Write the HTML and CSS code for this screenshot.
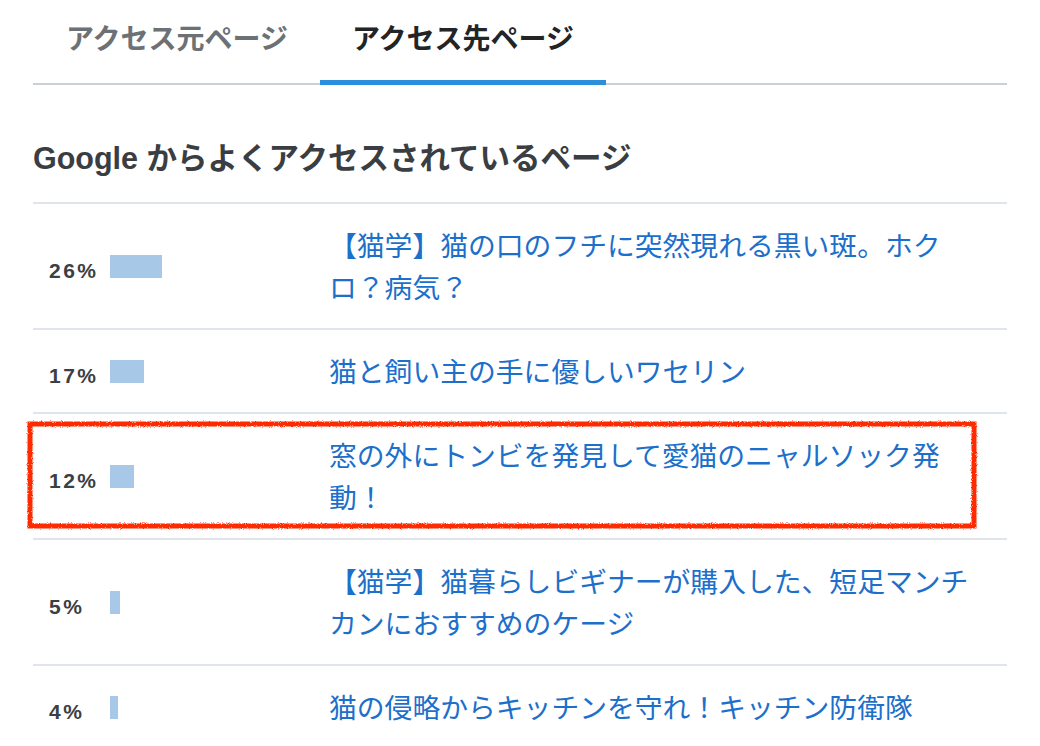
FILE: index.html
```html
<!DOCTYPE html>
<html lang="ja">
<head>
    <meta charset="UTF-8">
    <title>アクセス先ページ</title>
    <link rel="stylesheet" href="styles.css">
</head>
<body>
    <div class="panel">
        <div class="tabs">
            <div class="tab">アクセス元ページ</div>
            <div class="tab active">アクセス先ページ</div>
        </div>

        <h2 class="title">Google からよくアクセスされているページ</h2>

        <div class="rank">
            <div class="row">
                <div class="stat"><span class="pct">26%</span><span class="bar" style="width: 52px;"></span></div>
                <a class="page" href="#">【猫学】猫の口のフチに突然現れる黒い斑。ホクロ？病気？</a>
            </div>
            <div class="row">
                <div class="stat"><span class="pct">17%</span><span class="bar" style="width: 34px;"></span></div>
                <a class="page" href="#">猫と飼い主の手に優しいワセリン</a>
            </div>
            <div class="row marked">
                <div class="stat"><span class="pct">12%</span><span class="bar" style="width: 24px;"></span></div>
                <a class="page" href="#">窓の外にトンビを発見して愛猫のニャルソック発動！</a>
                <!-- hand drawn highlight -->
                <svg class="mark" width="952" height="110" viewBox="0 0 952 110">
                    <defs>
                        <filter id="rough" x="-2%" y="-10%" width="104%" height="120%">
                            <feTurbulence type="fractalNoise" baseFrequency="0.9" numOctaves="2" seed="3"/>
                            <feDisplacementMap in="SourceGraphic" scale="3"/>
                        </filter>
                    </defs>
                    <rect x="4" y="4" width="944" height="102" fill="none" stroke="#ff2a00" stroke-width="5" filter="url(#rough)"/>
                </svg>
            </div>
            <div class="row">
                <div class="stat"><span class="pct">5%</span><span class="bar" style="width: 10px;"></span></div>
                <a class="page" href="#">【猫学】猫暮らしビギナーが購入した、短足マンチカンにおすすめのケージ</a>
            </div>
            <div class="row">
                <div class="stat"><span class="pct">4%</span><span class="bar" style="width: 8px;"></span></div>
                <a class="page" href="#">猫の侵略からキッチンを守れ！キッチン防衛隊</a>
            </div>
        </div>
    </div>
</body>
</html>
```

FILE: styles.css
```css
body {
    margin: 0;
    background-color: #ffffff;
    font-family: "Liberation Sans", "Noto Sans CJK JP", sans-serif;
}
.panel {
    width: 974px;
    margin-left: 33px;
}
/* Tabs */
.tabs {
    display: flex;
    border-bottom: 2px solid #c9d1d7;
}
.tab {
    width: 286px;
    height: 80px;
    line-height: 80px;
    text-align: center;
    font-size: 28px;
    font-weight: bold;
    color: #6c7175;
}
.tab:first-child {
    margin-left: 1px;
}
.tab.active {
    color: #222426;
    border-bottom: 5px solid #2b8fdb;
    margin-bottom: -2px;
}
/* Heading */
.title {
    margin: 53px 0 24px 0;
    font-size: 30.5px;
    line-height: 40px;
    font-weight: bold;
    color: #3a3e42;
}
/* Ranking rows */
.row {
    position: relative;
    display: flex;
    align-items: center;
    border-top: 2px solid #dfe5ea;
    padding: 22px 0 18px 0;
}
.stat {
    width: 280px;
    padding-left: 16px;
    padding-top: 4px;
    flex-shrink: 0;
    line-height: 24px;
}
.pct {
    display: inline-block;
    width: 61px;
    font-size: 21px;
    font-weight: bold;
    letter-spacing: 2.5px;
    color: #3b4044;
}
.bar {
    display: inline-block;
    height: 23px;
    background-color: #a8c8e8;
    vertical-align: baseline;
}
.page {
    width: 650px;
    font-size: 27.8px;
    line-height: 42px;
    color: #1c6fca;
    text-decoration: none;
}
.mark {
    position: absolute;
    left: -7px;
    top: 6px;
}
```
